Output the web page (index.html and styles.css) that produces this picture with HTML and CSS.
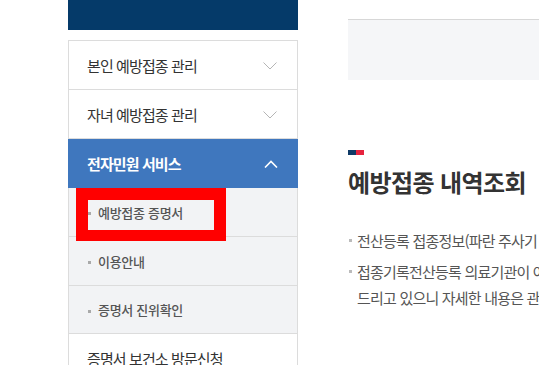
FILE: index.html
```html
<!DOCTYPE html>
<html lang="ko">
<head>
<meta charset="utf-8">
<link rel="stylesheet" href="styles.css">
</head>
<body>
<div class="page">
  <aside class="sidebar">
    <div class="side-head"></div>
    <ul class="menu">
      <li class="menu-item">
        <span>본인 예방접종 관리</span>
        <svg class="chev" width="14" height="8" viewBox="0 0 14 8"><path d="M0.5 0.5 L7 7 L13.5 0.5" fill="none" stroke="#b5b5b5" stroke-width="1"/></svg>
      </li>
      <li class="menu-item">
        <span>자녀 예방접종 관리</span>
        <svg class="chev" width="14" height="8" viewBox="0 0 14 8"><path d="M0.5 0.5 L7 7 L13.5 0.5" fill="none" stroke="#b5b5b5" stroke-width="1"/></svg>
      </li>
      <li class="menu-item active">
        <span>전자민원 서비스</span>
        <svg class="chev" width="14" height="8" viewBox="0 0 14 8"><path d="M1 7.5 L7 1.5 L13 7.5" fill="none" stroke="#ffffff" stroke-width="1.6"/></svg>
      </li>
      <li class="submenu">
        <ul>
          <li class="sub-item current"><span>예방접종 증명서</span></li>
          <li class="sub-item"><span>이용안내</span></li>
          <li class="sub-item"><span>증명서 진위확인</span></li>
        </ul>
      </li>
      <li class="menu-item">
        <span>증명서 보건소 방문신청</span>
      </li>
    </ul>
  </aside>
  <main class="content">
    <div class="search-box"></div>
    <div class="flag"><i class="navy"></i><i class="red"></i></div>
    <h1 class="title">예방접종 내역조회</h1>
    <ul class="notes">
      <li>전산등록 접종정보(파란 주사기 표시)는 증명서 발급이 가능합니다.</li>
      <li>접종기록전산등록 의료기관이 아닌 곳에서 접종한 경우 확인이 어려울 수 있습니다.<br>드리고 있으니 자세한 내용은 관할 보건소로 문의하시기 바랍니다.</li>
    </ul>
  </main>
</div>
</body>
</html>
```
FILE: styles.css
```css
*, *::before, *::after { box-sizing: border-box; }
html, body { margin: 0; padding: 0; }
body {
  width: 539px;
  height: 365px;
  overflow: hidden;
  background: #fff;
  font-family: "Noto Sans CJK KR", "Noto Sans", sans-serif;
  color: #333;
}
.page {
  display: flex;
  padding-left: 68px;
}
.sidebar {
  width: 230px;
  flex: none;
}
.side-head {
  height: 30px;
  background: #053a69;
}
.menu {
  list-style: none;
  margin: 10px 0 0;
  padding: 0;
  border: 1px solid #dcdcdc;
  border-bottom: none;
}
.menu-item {
  height: 49px;
  display: flex;
  align-items: center;
  justify-content: space-between;
  padding: 0 20px 0 18px;
  border-bottom: 1px solid #dcdcdc;
  font-size: 15px;
  letter-spacing: -0.9px;
  color: #333;
}
.menu-item .chev { margin-top: 1px; }
.menu-item.active {
  background: #3f77be;
  color: #fff;
  font-weight: 700;
  margin: 0 -1px;
  padding: 0 20px 0 19px;
  border-bottom: none;
  height: 49px;
}
.submenu ul {
  list-style: none;
  margin: 0;
  padding: 0;
  background: #f2f3f5;
}
.sub-item {
  height: 49px;
  display: flex;
  align-items: center;
  padding-left: 29px;
  border-bottom: 1px solid #dcdcdc;
  font-size: 13px;
  font-weight: 500;
  color: #555;
  letter-spacing: -0.3px;
  position: relative;
}
.sub-item::before {
  content: "";
  position: absolute;
  left: 19px;
  top: 24px;
  width: 3px;
  height: 3px;
  background: #a9a9a9;
}
.sub-item.current::after {
  content: "";
  position: absolute;
  left: 7px;
  top: 0;
  width: 150px;
  height: 53px;
  border: 12px solid #ff0000;
  border-bottom-width: 11px;
}
.sub-item:last-child { height: 48px; }
.content {
  flex: none;
  width: 700px;
  margin-left: 50px;
}
.search-box {
  margin-top: 19px;
  height: 61px;
  background: #f5f6f8;
  border-top: 1px solid #d7d7d7;
}
.flag {
  display: flex;
  margin-top: 70px;
  height: 5px;
}
.flag i { display: block; width: 8px; height: 5px; }
.flag .navy { background: #0f3a66; }
.flag .red { background: #e6233e; }
.title {
  margin: 9px 0 0;
  font-size: 24px;
  font-weight: 700;
  color: #333;
  letter-spacing: -0.6px;
  line-height: 36px;
}
.notes {
  list-style: none;
  margin: 28px 0 0;
  padding: 0;
  font-size: 15px;
  color: #555;
  letter-spacing: -0.8px;
  white-space: nowrap;
}
.notes li {
  position: relative;
  padding-left: 9px;
  line-height: 26px;
  margin-bottom: 5px;
}
.notes li::before {
  content: "";
  position: absolute;
  left: 1px;
  top: 11px;
  width: 3px;
  height: 3px;
  background: #bbb;
}
```
